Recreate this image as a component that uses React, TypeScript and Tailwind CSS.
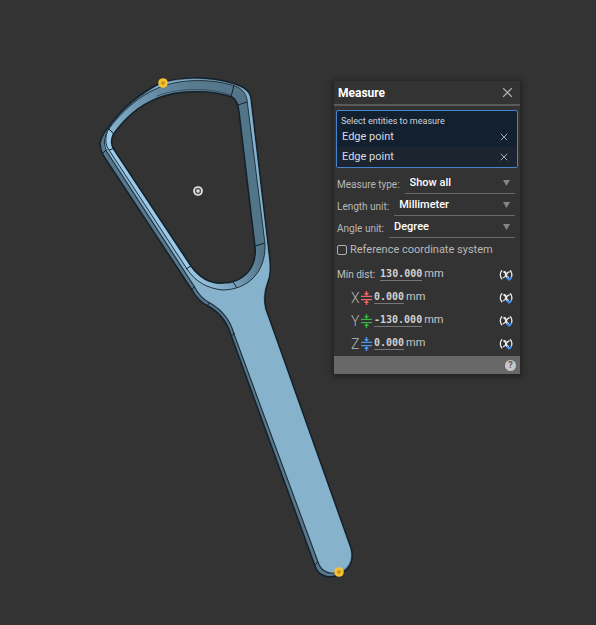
import { useState } from 'react';

const unitFields = [
  { id: 'measure-type', label: 'Measure type:', options: ['Show all', 'Minimum', 'Maximum'] },
  { id: 'length-unit', label: 'Length unit:', options: ['Millimeter', 'Centimeter', 'Inch'] },
  { id: 'angle-unit', label: 'Angle unit:', options: ['Degree', 'Radian'] },
];

const axes = [
  { name: 'X', value: '0.000', color: '#e8686a' },
  { name: 'Y', value: '-130.000', color: '#35b140' },
  { name: 'Z', value: '0.000', color: '#4b93ea' },
];

function CloseIcon({ size }: { size: number }) {
  return (
    <svg width={size} height={size} viewBox="0 0 10 10" fill="none" stroke="currentColor" strokeWidth="1.2">
      <path d="M1 1 9 9M9 1 1 9" />
    </svg>
  );
}

function AxisIcon({ color }: { color: string }) {
  return (
    <svg width="11" height="14" viewBox="0 0 11 14" stroke={color} fill={color} strokeWidth="1.4">
      <path d="M0 5.4H11M0 8.6H11" />
      <path d="M5.5 0V4M5.5 14V10" />
      <path d="M3 2H8L5.5 5ZM3 12H8L5.5 9Z" stroke="none" />
    </svg>
  );
}

function VariableButton({ label }: { label: string }) {
  return (
    <button type="button" aria-label={label} className="h-4 w-[14px]">
      <svg width="14" height="16" viewBox="0 0 14 16" fill="none" stroke="#ececec" strokeLinecap="round">
        <path d="M2.8 3.8C.8 6 .8 9.5 2.8 11.8M11.4 3.8C13.4 6 13.4 9.5 11.4 11.8" strokeWidth="1.3" />
        <path d="M5.2 5C7.4 4.4 6.8 11 9 10.4" strokeWidth="2" />
        <path d="M10 5C8 4.6 6.6 10.8 4.4 10.6" strokeWidth="1.4" />
        <path d="M8.4 11 10 12.6 12 10.6" stroke="#3b8df0" strokeWidth="2" />
      </svg>
    </button>
  );
}

function Value({ value }: { value: string }) {
  return (
    <>
      <span className="border-b border-[#777] font-['DejaVu_Sans_Mono',monospace] text-[10px] leading-3 font-bold text-[#d0d0d0]">
        {value}
      </span>
      <span className="ml-[2px] text-[11px] text-[#c8c8c8]">mm</span>
    </>
  );
}

function PointMarker({ x, y }: { x: number; y: number }) {
  return (
    <g>
      <circle cx={x} cy={y} r="4.8" fill="#f5c12e" />
      <circle cx={x} cy={y} r="1.4" fill="#d8961c" stroke="#a87c20" strokeWidth=".6" />
    </g>
  );
}

function Model() {
  return (
    <svg
      className="absolute top-0 left-0"
      width="596"
      height="625"
      viewBox="0 0 596 625"
      fill="none"
      strokeLinejoin="round"
      role="img"
      aria-label="Part model"
    >
      <defs>
        <linearGradient id="arc" x1="108" y1="130" x2="235" y2="90" gradientUnits="userSpaceOnUse">
          <stop offset="0" stopColor="#86b2cd" />
          <stop offset=".3" stopColor="#6c94ad" />
          <stop offset=".7" stopColor="#587b90" />
          <stop offset="1" stopColor="#54758a" />
        </linearGradient>
        <linearGradient id="bottom" x1="195" y1="270" x2="262" y2="262" gradientUnits="userSpaceOnUse">
          <stop offset="0" stopColor="#97c5e2" />
          <stop offset=".5" stopColor="#7ba5bf" />
          <stop offset="1" stopColor="#53758a" />
        </linearGradient>
        <clipPath id="ring">
          <path
            clipRule="evenodd"
            d="M0 0H596V625H0ZM113 135C126 116 143 104 158 98C176 91 208 89 232 97C236 99 238 104 239 112L255 247C257 269 242 283 223 283C209 284 199 277 191 266L115 151C111 146 111 140 113 135Z"
          />
        </clipPath>
      </defs>

      <g clipPath="url(#ring)">
        {/* outer wall */}
        <path
          d="M100 143C101 136 105 131 110 125C122 109 139 94 160 83C178 77 208 75 235 84C245 87 250 91 251 98L270 260C271 272 270 277 268 282C264 293 264 300 266 309L351 548C355 560 349 570 340 574C330 580 318 576 315 566L231 335C227 322 219 312 208 306C200 302 196 297 192 290L103 155C101 151 100 147 100 143Z"
          fill="#56778c"
          stroke="#14212a"
          strokeWidth="1.5"
        />
        {/* top face */}
        <path
          d="M104 142C104 136 107 132 112 125C124 110 141 95 161 84C180 78 209 77 235 85C244 88 249 92 250 98L269 260C270 272 269 277 267 282C263 293 263 300 265 309L350 548C353 559 349 568 340 571C331 576 321 572 318 562L234 334C230 319 222 310 210 303C202 299 198 294 194 286L107 152C104 149 104 146 104 142Z"
          fill="#87b2cc"
        />
        <path
          d="M112 125C105 133 102 143 107 152L194 286C198 294 202 299 210 303C222 310 230 319 234 334L318 562C321 572 331 576 340 571"
          stroke="#1c2c36"
          strokeWidth="1.1"
        />
        {/* inner wall */}
        <path d="M108 130C122 111 139 96 158 88C178 79 210 78 235 86L231 98L200 99L113 138Z" fill="url(#arc)" />
        <path d="M235 86C243 89 246 94 247 100L265 245L254 248L236 112L229 98Z" fill="#53758a" />
        <path d="M108 130C105 137 105 145 109 150L187 269L194 268L120 150V136L113 135Z" fill="#9bcbe9" />
        <path d="M265 244C266 272 248 290 222 290C206 288 195 281 187 269L192 265L220 275L255 246Z" fill="url(#bottom)" />
        <path
          d="M108 130C122 111 139 96 158 88C178 79 210 78 235 86C243 89 246 94 247 100L265 244C266 272 248 290 222 290C206 288 195 281 187 269L109 150C105 145 105 137 108 130Z"
          stroke="#20323e"
          strokeWidth="1"
        />
      </g>
      <path
        d="M113 135C126 116 143 104 158 98C176 91 208 89 232 97C236 99 238 104 239 112L255 247C257 269 242 283 223 283C209 284 199 277 191 266L115 151C111 146 111 140 113 135Z"
        stroke="#14212a"
        strokeWidth="1.6"
      />
      {/* inner lip */}
      <path d="M157 96C178 88 208 87 231 95" stroke="#30495a" strokeWidth=".8" />
      {/* seams between faces */}
      <path
        d="M108 128 114 134M109 150 115 148M234 85 231 97M247 102 238 105M265 243 255 246M237 288 233 282M186 269 191 266M191 291 195 286M207 306 210 302M231 336 235 333M102 154 106 150M315 565 318 562"
        stroke="#14212a"
        strokeWidth="1"
      />

      <PointMarker x={163} y={83} />
      <PointMarker x={339} y={572} />
      {/* origin */}
      <circle cx="198" cy="191" r="4" fill="#555" stroke="#e8e8e8" strokeWidth="1.7" />
      <circle cx="198" cy="191" r="1.7" fill="#ddd" />
    </svg>
  );
}

export default function App() {
  const [entities, setEntities] = useState(['Edge point', 'Edge point']);

  return (
    <main className="relative min-h-screen overflow-hidden bg-[#333333] font-[Roboto,'Liberation_Sans',sans-serif]">
      <Model />

      <section
        aria-label="Measure"
        className="absolute top-[81px] right-[76px] w-[186px] bg-[#333333] shadow-[0_1px_6px_2px_rgba(0,0,0,0.35)]"
      >
        <header className="flex h-[25px] items-center justify-between border-b-2 border-[#5a5a5a] pr-[7px] pl-1">
          <h1 className="text-xs font-bold text-white">Measure</h1>
          <button type="button" aria-label="Close" className="text-[#b0b0b0]">
            <CloseIcon size={11} />
          </button>
        </header>

        {/* Selected entities */}
        <div className="mx-[2px] mt-1 rounded-[2px] border border-[#4584cf] bg-[#13202f]">
          <p className="pt-1 pl-1 text-[9px] leading-3 text-[#cdd3d9]">Select entities to measure</p>
          <ul>
            {entities.map((entity, i) => (
              <li key={i} className="flex h-5 items-center justify-between pr-[9px] pl-[5px] text-[11px] text-[#d5dbe2] last:bg-[#1c252f]">
                {entity}
                <button
                  type="button"
                  aria-label={`Remove ${entity}`}
                  className="text-[#a8b0b8]"
                  onClick={() => setEntities(entities.filter((_, n) => n !== i))}
                >
                  <CloseIcon size={8} />
                </button>
              </li>
            ))}
          </ul>
        </div>

        {/* Options */}
        <div className="mt-1 pr-[5px] pl-[3px]">
          {unitFields.map((field) => (
            <div key={field.id} className="flex h-[22px] items-end gap-[5px]">
              <label htmlFor={field.id} className="text-[10px] leading-[18px] text-[#b8b8b8]">
                {field.label}
              </label>
              <div className="relative flex-1 border-b border-[#6a6a6a]">
                <select
                  id={field.id}
                  className="block h-5 w-full appearance-none bg-transparent pl-[5px] text-[11px] font-medium text-white outline-none"
                >
                  {field.options.map((option) => (
                    <option key={option}>{option}</option>
                  ))}
                </select>
                <svg className="pointer-events-none absolute top-[7px] right-[5px]" width="7" height="6" viewBox="0 0 7 6">
                  <path d="M0 0H7L3.5 6Z" fill="#858585" />
                </svg>
              </div>
            </div>
          ))}
          <label className="mt-1 flex h-4 items-center gap-[3px] text-[11px] text-[#b8b8b8]">
            <input type="checkbox" className="size-[10px] appearance-none rounded-[2px] border border-[#b0b0b0] checked:bg-[#4584cf]" />
            Reference coordinate system
          </label>
        </div>

        {/* Results */}
        <div className="mt-[5px] pr-[7px] pb-px pl-[3px]">
          <div className="flex h-[23px] items-center">
            <span className="mr-[5px] text-[10px] text-[#c0c0c0]">Min dist:</span>
            <Value value="130.000" />
            <span className="ml-auto flex">
              <VariableButton label="Create variable from minimum distance" />
            </span>
          </div>
          {axes.map((axis) => (
            <div key={axis.name} className="flex h-[23px] items-center pl-[14px]">
              <span className="w-[10px] text-sm font-light text-[#b8b8b8]">{axis.name}</span>
              <span className="mr-[2px]">
                <AxisIcon color={axis.color} />
              </span>
              <Value value={axis.value} />
              <span className="ml-auto flex">
                <VariableButton label={`Create variable from ${axis.name}`} />
              </span>
            </div>
          ))}
        </div>

        <footer className="flex h-[18px] items-center justify-end bg-[#686868] pr-1">
          <button type="button" aria-label="Help" className="size-[11px] rounded-full bg-[#c8c8c8] text-[9px] leading-[11px] font-bold text-[#5a5a5a]">
            ?
          </button>
        </footer>
      </section>
    </main>
  );
}
